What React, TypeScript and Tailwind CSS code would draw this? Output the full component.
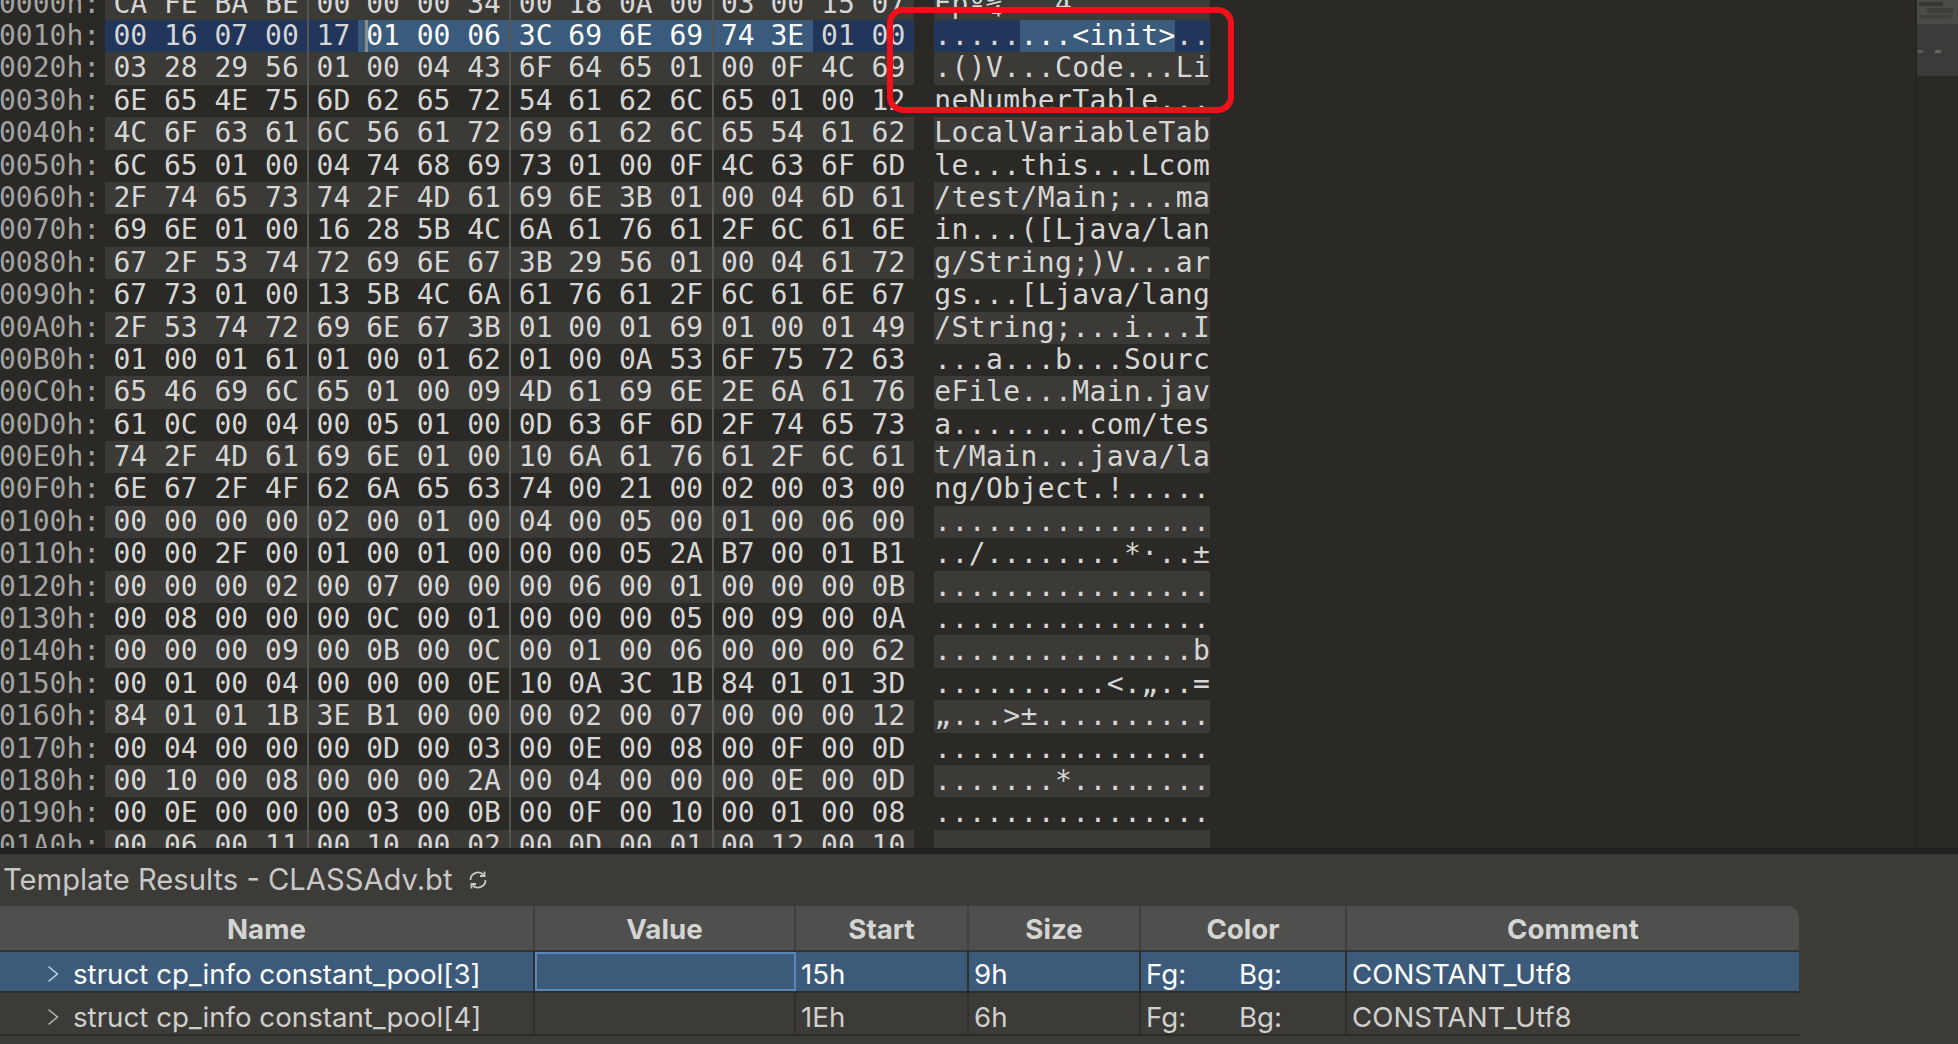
import React from 'react';

const hexRows = [
  'CA FE BA BE 00 00 00 34 00 18 0A 00 03 00 15 07',
  '00 16 07 00 17 01 00 06 3C 69 6E 69 74 3E 01 00',
  '03 28 29 56 01 00 04 43 6F 64 65 01 00 0F 4C 69',
  '6E 65 4E 75 6D 62 65 72 54 61 62 6C 65 01 00 12',
  '4C 6F 63 61 6C 56 61 72 69 61 62 6C 65 54 61 62',
  '6C 65 01 00 04 74 68 69 73 01 00 0F 4C 63 6F 6D',
  '2F 74 65 73 74 2F 4D 61 69 6E 3B 01 00 04 6D 61',
  '69 6E 01 00 16 28 5B 4C 6A 61 76 61 2F 6C 61 6E',
  '67 2F 53 74 72 69 6E 67 3B 29 56 01 00 04 61 72',
  '67 73 01 00 13 5B 4C 6A 61 76 61 2F 6C 61 6E 67',
  '2F 53 74 72 69 6E 67 3B 01 00 01 69 01 00 01 49',
  '01 00 01 61 01 00 01 62 01 00 0A 53 6F 75 72 63',
  '65 46 69 6C 65 01 00 09 4D 61 69 6E 2E 6A 61 76',
  '61 0C 00 04 00 05 01 00 0D 63 6F 6D 2F 74 65 73',
  '74 2F 4D 61 69 6E 01 00 10 6A 61 76 61 2F 6C 61',
  '6E 67 2F 4F 62 6A 65 63 74 00 21 00 02 00 03 00',
  '00 00 00 00 02 00 01 00 04 00 05 00 01 00 06 00',
  '00 00 2F 00 01 00 01 00 00 00 05 2A B7 00 01 B1',
  '00 00 00 02 00 07 00 00 00 06 00 01 00 00 00 0B',
  '00 08 00 00 00 0C 00 01 00 00 00 05 00 09 00 0A',
  '00 00 00 09 00 0B 00 0C 00 01 00 06 00 00 00 62',
  '00 01 00 04 00 00 00 0E 10 0A 3C 1B 84 01 01 3D',
  '84 01 01 1B 3E B1 00 00 00 02 00 07 00 00 00 12',
  '00 04 00 00 00 0D 00 03 00 0E 00 08 00 0F 00 0D',
  '00 10 00 08 00 00 00 2A 00 04 00 00 00 0E 00 0D',
  '00 0E 00 00 00 03 00 0B 00 0F 00 10 00 01 00 08',
  '00 06 00 11 00 10 00 02 00 0D 00 01 00 12 00 10',
];

const specials: Record<string, string> = { CA: 'Ê', FE: 'þ', BA: 'º', BE: '¾', B7: '·', B1: '±', '84': '„' };

function toChar(byte: string) {
  if (specials[byte]) return specials[byte];
  const code = parseInt(byte, 16);
  return code >= 32 && code < 127 ? String.fromCharCode(code) : '.';
}

function label(index: number) {
  return index.toString(16).toUpperCase().padStart(3, '0') + '0h:';
}

// row 1 holds the selection: cells 5-13 are the bright part
function cellBg(row: number, col: number) {
  if (row !== 1) return '';
  return col >= 5 && col <= 13 ? 'bg-[#3b5b7d] text-white' : 'bg-[#22355b]';
}

function HexRow({ bytes, row }: { bytes: string[]; row: number }) {
  const stripe = row % 2 === 0 ? 'bg-[#3b3a37]' : '';
  return (
    <div className="flex h-[32.4px] shrink-0 leading-[32px]">
      <div className="w-[105px] shrink-0 -ml-[1px] text-[#a3a3a0]">{label(row)}</div>
      <div className="ml-[1px] flex w-[808.8px] shrink-0">
        {bytes.map((b, col) => (
          <span
            key={col}
            className={`relative w-[50.55px] shrink-0 text-center ${stripe} ${cellBg(row, col)} ${
              col % 4 === 0 && col !== 0 ? 'border-l-2 border-[#545452]' : ''
            }`}
          >
            {b}
            {row === 1 && col === 5 && (
              <span className="absolute top-0 left-[7px] h-full w-[3px] bg-[#8c8c8a]" />
            )}
          </span>
        ))}
      </div>
      <div className="ml-[20.2px] flex w-[276px] shrink-0">
        {bytes.map((b, col) => (
          <span
            key={col}
            className={`w-[17.25px] shrink-0 text-center ${stripe} ${cellBg(row, col)}`}
          >
            {toChar(b)}
          </span>
        ))}
      </div>
    </div>
  );
}

function Minimap() {
  return (
    <div className="flex w-[43px] shrink-0 flex-col border-l-2 border-[#232424]">
      <div className="flex h-[24px] flex-col gap-[2px] bg-[#4a4a47] p-[2px]">
        <div className="h-[4px] w-[24px] bg-[#363633]" />
        <div className="ml-[8px] h-[5px] w-[26px] bg-[#3d3d3a]" />
        <div className="h-[4px] w-[32px] bg-[#3f3f3c]" />
      </div>
      <div className="flex h-[52px] items-center justify-between bg-[#3c3b39] px-[1px] pt-[2px]">
        <div className="h-[3px] w-[5px] bg-[#5c5c59]" />
        <div className="mr-[16px] h-[3px] w-[6px] bg-[#66665f]" />
      </div>
      <div className="flex-1" />
    </div>
  );
}

const columns = ['Name', 'Value', 'Start', 'Size', 'Color', 'Comment'];

const rows = [
  { name: 'struct cp_info constant_pool[3]', start: '15h', size: '9h', comment: 'CONSTANT_Utf8', active: true },
  { name: 'struct cp_info constant_pool[4]', start: '1Eh', size: '6h', comment: 'CONSTANT_Utf8', active: false },
];

function Chevron({ active }: { active: boolean }) {
  return (
    <svg width="13" height="16" viewBox="0 0 13 16" fill="none" className="shrink-0">
      <path
        d="M2 1l8.5 7L2 15"
        stroke={active ? '#b5d5f5' : '#b5b5b2'}
        strokeWidth="1.6"
        strokeLinecap="round"
        strokeLinejoin="round"
      />
    </svg>
  );
}

function RefreshIcon() {
  return (
    <svg width="20" height="20" viewBox="0 0 20 20" fill="none" stroke="#c8c8c6" strokeWidth="1.8">
      <path d="M2.5 10a7.5 7.5 0 0 1 12.8-5.3" />
      <path d="M17.5 10a7.5 7.5 0 0 1-12.8 5.3" />
      <path d="M16.5 1.5v4.5h-4.5" />
      <path d="M3.5 18.5V14h4.5" />
    </svg>
  );
}

function TemplateTable() {
  const grid = 'grid w-[1799px] grid-cols-[535px_261px_173px_172px_206px_452px]';
  return (
    <div className="text-[27.7px] leading-[30px]">
      <div className={`${grid} h-[44px] rounded-tr-xl bg-[#4f4f4d] font-bold text-[#d4d4d2]`}>
        {columns.map((c, i) => (
          <div
            key={c}
            className={`flex items-center justify-center pt-[1px] ${i < 5 ? 'border-r-2 border-[#3f3f3d]' : ''}`}
          >
            {c}
          </div>
        ))}
      </div>
      <div className="h-[2px] w-[1799px] bg-[#333331]" />
      {rows.map((r) => {
        const textTop = r.active ? 'pt-[4px]' : 'pt-[7px]';
        return (
          <div
            key={r.name}
            className={`${grid} border-b-2 border-[#2c2c2a] ${
              r.active ? 'h-[41px] bg-[#3c5b7b] text-white' : 'h-[43px] text-[#cfcfcd]'
            }`}
          >
            <div className={`flex items-center gap-[13px] border-r-2 border-[#2f2f2d] pl-[47px] ${textTop}`}>
              <Chevron active={r.active} />
              {r.name}
            </div>
            <div className={r.active ? 'border-2 border-[#5b88b8]' : 'border-r-2 border-[#2f2f2d]'} />
            <div className={`flex items-center border-r-2 border-[#2f2f2d] pl-[5px] ${textTop}`}>{r.start}</div>
            <div className={`flex items-center border-r-2 border-[#2f2f2d] pl-[5px] ${textTop}`}>{r.size}</div>
            <div className={`flex items-center border-r-2 border-[#2f2f2d] pl-[5px] ${textTop}`}>
              <span className="w-[93px]">Fg:</span>
              <span>Bg:</span>
            </div>
            <div className={`flex items-center pl-[5px] ${textTop}`}>{r.comment}</div>
          </div>
        );
      })}
    </div>
  );
}

export default function App() {
  return (
    <div className="flex h-[1044px] w-[1958px] flex-col overflow-hidden bg-[#2a2926] font-['Inter',sans-serif]">
      <div className="relative flex h-[848px] shrink-0 overflow-hidden">
        <div className="flex-1 font-['DejaVu_Sans_Mono',monospace] text-[28px] text-[#d6d6d4]">
          <div className="-mt-[12.4px]">
            {hexRows.map((line, i) => (
              <HexRow key={i} row={i} bytes={line.split(' ')} />
            ))}
          </div>
        </div>
        <Minimap />
        <div className="absolute top-[7px] left-[887px] h-[106px] w-[347px] rounded-[16px] border-[6px] border-[#f0101c]" />
      </div>

      <div className="h-[6px] shrink-0 bg-[#1f2121]" />

      <div className="flex-1 bg-[#3c3b37]">
        <div className="flex h-[52px] items-center gap-[15px] pl-[3px] text-[29.2px] text-[#c8c8c6]">
          <span>Template Results - CLASSAdv.bt</span>
          <RefreshIcon />
        </div>
        <TemplateTable />
      </div>
    </div>
  );
}
